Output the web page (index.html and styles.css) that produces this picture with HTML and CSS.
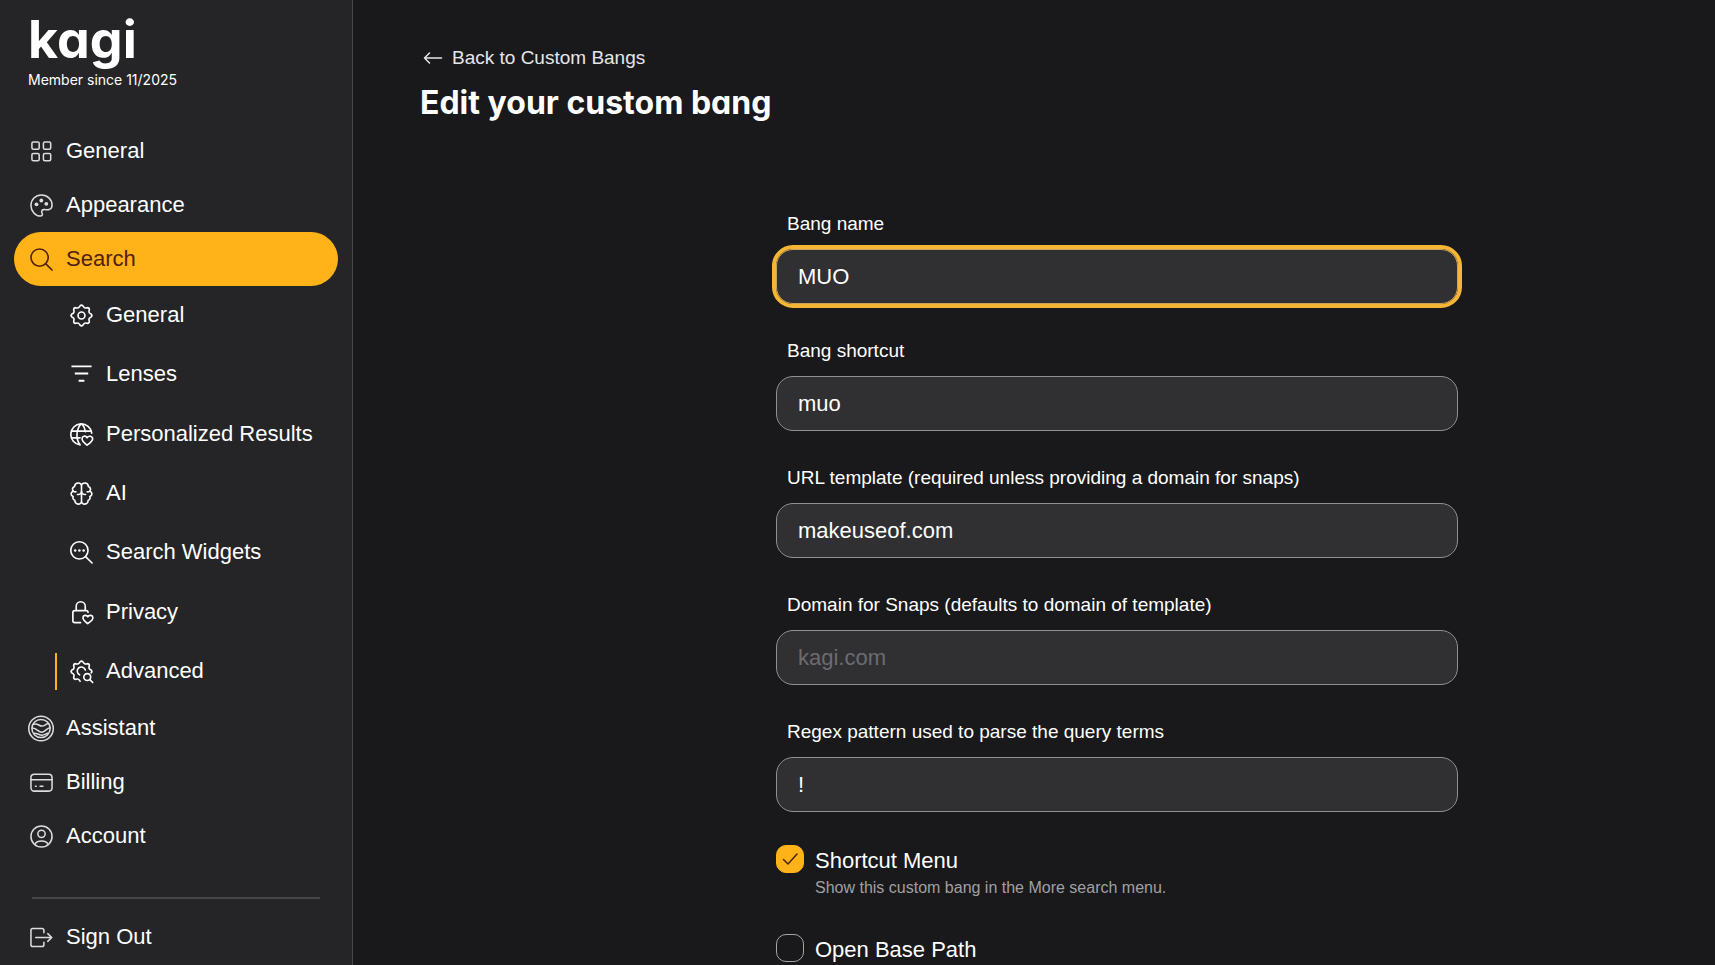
FILE: index.html
```html
<!DOCTYPE html>
<html lang="en">
<head>
<meta charset="utf-8">
<title>Edit your custom bang</title>
<link rel="stylesheet" href="styles.css">
</head>
<body>
<div class="layout">
  <aside class="sidebar">
    <header class="brand">
      <a class="logo" href="#">kagi</a>
      <p class="member">Member since 11/2025</p>
    </header>
    <nav class="nav">
      <a class="item" href="#">
        <svg class="icon dim" viewBox="0 0 24 24"><rect x="2" y="2" width="7.6" height="7.6" rx="1.5"/><rect x="14" y="2" width="7.6" height="7.6" rx="1.5"/><rect x="2" y="14" width="7.6" height="7.6" rx="1.5"/><rect x="14" y="14" width="7.6" height="7.6" rx="1.5"/></svg>
        General</a>
      <a class="item" href="#">
        <svg class="icon dim" viewBox="0 0 24 24"><path d="M12 1C5.600 1 1 6 1 12s4.800 11 9.800 11c2 0 2.600-1.400 1.900-2.700-1-1.800-.6-3.800 1.600-4 2-.2 3.900.4 5.700-.1 2.200-.6 3-2.500 3-4.700C23 5.500 18 1 12 1Z"/><g class="dots"><circle cx="6.800" cy="10.800" r="2"/><circle cx="11.800" cy="6.800" r="2"/><circle cx="17" cy="10.300" r="2"/></g></svg>
        Appearance</a>
      <a class="item active" href="#" aria-current="page">
        <svg class="icon" viewBox="0 0 24 24"><circle cx="10" cy="10" r="9"/><path d="m16.500 16.500 6.500 6.500"/></svg>
        Search</a>
      <div class="subnav">
        <a class="subitem" href="#">
          <svg class="icon" viewBox="0 0 24 24"><path d="M10.500 1.900Q12 .4 13.500 1.900Q14.800 5.200 18.100 3.800Q20.200 3.800 20.200 5.900Q18.800 9.200 22.100 10.500Q23.600 12 22.100 13.500Q18.800 14.800 20.200 18.100Q20.200 20.200 18.100 20.200Q14.800 18.800 13.500 22.100Q12 23.600 10.500 22.100Q9.200 18.800 5.900 20.200Q3.800 20.200 3.800 18.100Q5.200 14.800 1.900 13.500Q.4 12 1.900 10.500Q5.200 9.200 3.800 5.900Q3.800 3.800 5.900 3.800Q9.200 5.200 10.500 1.900Z"/><circle cx="12" cy="12" r="3.600"/></svg>
          General</a>
        <a class="subitem" href="#">
          <svg class="icon bars" viewBox="0 0 24 24"><path d="M1.500 3.500h21M5 11h14M9 18.500h6"/></svg>
          Lenses</a>
        <a class="subitem" href="#">
          <svg class="icon" viewBox="0 0 24 24"><path d="M22.700 10.500A11 11 0 1 0 10.500 22.800M1.500 8.500h20.800M1.500 15.500h9M11.500 1C6 7 6 17 10.500 22.800M12.500 1c2 2.300 3.200 5 3.600 8"/><path d="M17.800 23.200c-2.800-2.200-5.200-3.900-5.200-6.700 0-2.900 3.600-3.800 5.200-1.100 1.600-2.700 5.800-1.700 5.800 1.100 0 2.900-3 4.500-5.800 6.700Z"/></svg>
          Personalized Results</a>
        <a class="subitem" href="#">
          <svg class="icon" viewBox="0 0 24 24"><path d="M12 4c0-4-7-4-7.200.6C2.400 5.500 2 8 3.400 9.600.4 10.500.4 14 3.300 15.200 2.600 17.300 3.500 18.600 5 19c.4 5.400 7 5 7 1ZM12 4c0-4 7-4 7.200.6 2.400.9 2.800 3.400 1.400 5 3 .9 3 4.400.1 5.600.7 2.100-.2 3.400-1.700 3.800-.4 5.400-7 5-7 1"/><path d="M3.400 9.600q1.300 1 2.800.6M20.600 9.600q-1.300 1-2.800.6M7.800 13c2.500.3 4.200-.8 4.200-3 0 2.200 1.700 3.300 4.200 3"/></svg>
          AI</a>
        <a class="subitem" href="#">
          <svg class="icon" viewBox="0 0 24 24"><circle cx="9.800" cy="9.800" r="9"/><path d="m16.300 16.300 6.700 6.700"/><g class="dots"><circle cx="5.400" cy="9.800" r="1.300"/><circle cx="9.800" cy="9.800" r="1.300"/><circle cx="14.200" cy="9.800" r="1.300"/></g></svg>
          Search Widgets</a>
        <a class="subitem" href="#">
          <svg class="icon" viewBox="0 0 24 24"><path d="M11 22.600H5Q3 22.600 3 20.600V12Q3 10 5 10H17Q18.800 10 18.800 12M6.500 10V5.500a4.700 4.700 0 0 1 9.400 0V10"/><path d="M18.500 23.600c-2.600-2-5-3.500-5-6.100 0-2.700 3.500-3.500 5-1.100 1.500-2.400 5.400-1.600 5.400 1.100 0 2.600-2.800 4.100-5.400 6.100Z"/></svg>
          Privacy</a>
        <a class="subitem current" href="#">
          <svg class="icon" viewBox="0 0 24 24"><path d="M22.100 13.500Q23.600 12 22.100 10.500Q18.800 9.200 20.200 5.900Q20.200 3.800 18.100 3.800Q14.800 5.200 13.500 1.900Q12 .4 10.500 1.900Q9.200 5.200 5.900 3.800Q3.800 3.800 3.800 5.900Q5.200 9.200 1.900 10.500Q.4 12 1.900 13.500Q5.200 14.800 3.800 18.100Q3.800 20.200 5.900 20.200Q9.200 18.800 10.500 22.100"/><path d="M10 15.500A4.300 4.300 0 1 1 16 10.500"/><circle cx="18" cy="17.800" r="3.600"/><path d="m20.700 20.500 3 3"/></svg>
          Advanced</a>
      </div>
      <a class="item" href="#">
        <svg class="icon dim" viewBox="0 0 24 24"><circle cx="11.500" cy="12" r="12.800"/><circle cx="11.500" cy="12" r="9.500"/><path d="M3.500 7.500c5-1.500 5.500 2 9 2 3 0 4.200-2.700 7-2.700M2.400 11.500c5 .2 6 4.500 9.800 4.500 3.500 0 5-4.500 8.800-4.700M4.500 17c3.500 0 5 2 8 2 2.500 0 4-1.500 6-2"/></svg>
        Assistant</a>
      <a class="item" href="#">
        <svg class="icon dim" viewBox="0 0 24 24"><rect x="1" y="3.500" width="22" height="17.500" rx="3.500"/><path d="M1 9.200h22M5.700 15.800h.8M10.500 15.800h3"/></svg>
        Billing</a>
      <a class="item" href="#">
        <svg class="icon dim" viewBox="0 0 24 24"><circle cx="12" cy="12" r="11"/><circle cx="12" cy="9.200" r="3.800"/><path d="M5 20.300q1.500-3.600 7-3.600t7 3.600"/></svg>
        Account</a>
      <hr class="divider">
      <a class="item" href="#">
        <svg class="icon dim" viewBox="0 0 24 24"><path d="M14.500 7V4.500Q14.500 2.500 12.500 2.500H3Q1 2.500 1 4.500V19.500Q1 21.500 3 21.500H12.500Q14.500 21.500 14.500 19.500V17M6 12H22.500M18.500 8l4.200 4-4.200 4"/></svg>
        Sign Out</a>
    </nav>
  </aside>
  <main class="main">
    <a class="back" href="#"><svg class="arrow" viewBox="0 0 20 14"><path d="M18.500 7H1.500M6.500 2 1.500 7l5 5"/></svg>Back to Custom Bangs</a>
    <h1 class="title">Edit your custom bang</h1>
    <div class="columns">
      <form class="form">
        <div class="field"><label for="name">Bang name</label><input class="text focused" id="name" type="text" value="MUO"></div>
        <div class="field"><label for="shortcut">Bang shortcut</label><input class="text" id="shortcut" type="text" value="muo"></div>
        <div class="field"><label for="url">URL template (required unless providing a domain for snaps)</label><input class="text" id="url" type="text" value="makeuseof.com"></div>
        <div class="field"><label for="domain">Domain for Snaps (defaults to domain of template)</label><input class="text" id="domain" type="text" placeholder="kagi.com"></div>
        <div class="field"><label for="regex">Regex pattern used to parse the query terms</label><input class="text" id="regex" type="text" value="!"></div>
        <div class="option">
          <span class="check"><input id="menu" type="checkbox" checked aria-describedby="menu-help"><svg class="tick" viewBox="0 0 28 28"><path d="M7.500 14.500 12 19l9-10"/></svg></span>
          <div class="option-text"><label for="menu">Shortcut Menu</label><p class="help" id="menu-help">Show this custom bang in the More search menu.</p></div>
        </div>
        <div class="option">
          <span class="check"><input id="base" type="checkbox"></span>
          <div class="option-text"><label for="base">Open Base Path</label></div>
        </div>
      </form>
    </div>
  </main>
</div>
</body>
</html>
```
FILE: styles.css
```css
* { box-sizing: border-box; }
body {
  margin: 0;
  background: #19191b;
  color: #fff;
  font-family: "Liberation Sans", Arial, sans-serif;
  font-size: 22px;
  line-height: 26px;
}
a { color: inherit; text-decoration: none; }
p, h1 { margin: 0; }
.layout { display: flex; min-height: 100vh; }

.sidebar {
  flex: none;
  width: 353px;
  padding: 0 14px;
  background: #252527;
  border-right: 1px solid #47474a;
}
.brand {
  height: 124px;
  padding: 10px 0 0 14px;
  font-family: Inter, sans-serif;
  font-feature-settings: "cv11";
}
.logo { display: block; font-size: 52px; line-height: 60px; font-weight: 700; }
.member { font-size: 14px; line-height: 20px; font-weight: 400; }

.item, .subitem { display: flex; align-items: center; gap: 13px; }
.item { height: 54px; padding-left: 16px; border-radius: 27px; }
.active { background: #ffb319; color: #4f210f; }
.subnav {
  display: grid;
  grid-template-rows: repeat(7, 1fr);
  height: 416px;
  margin-top: -1px;
  padding-left: 36px;
}
.subitem { position: relative; padding-left: 20px; }
.current::before {
  content: "";
  position: absolute;
  left: 5px;
  top: 11px;
  bottom: 11px;
  width: 2px;
  background: #ffb319;
}
.icon {
  flex: none;
  width: 23px;
  height: 23px;
  margin-top: 1px;
  overflow: visible;
  fill: none;
  stroke: currentColor;
  stroke-width: 1.7;
  stroke-linecap: round;
  stroke-linejoin: round;
}
.dim { color: #dcdcde; stroke-width: 1.6; }
.bars { stroke-width: 2; stroke-linecap: butt; }
.dots { fill: currentColor; stroke: none; }
.divider {
  height: 2px;
  margin: 34px 18px 11px;
  border: 0;
  background: #464648;
}

.main { flex: 1; min-width: 0; padding: 45px 0 0 67px; }
.back {
  display: inline-flex;
  align-items: center;
  gap: 9px;
  padding-left: 3px;
  color: #e6e6e8;
  font-size: 19px;
}
.arrow {
  width: 20px;
  height: 14px;
  fill: none;
  stroke: currentColor;
  stroke-width: 1.5;
  stroke-linecap: round;
  stroke-linejoin: round;
}
.title {
  margin-top: 12px;
  font-family: Inter, sans-serif;
  font-feature-settings: "cv11";
  font-size: 32px;
  line-height: 40px;
  font-weight: 700;
}
.columns { display: grid; grid-template-columns: 356fr 682fr 257fr; margin-top: 88px; }
.form { grid-column: 2; }
.field { display: grid; gap: 12px; margin-bottom: 34px; }
.field label { padding-left: 11px; font-size: 19px; }
.text {
  width: 100%;
  height: 55px;
  padding: 0 21px;
  border: 1px solid #909094;
  border-radius: 17px;
  background: #303033;
  color: #fff;
  font: inherit;
}
.text::placeholder { color: #6c6c6f; opacity: 1; }
.text.focused { outline: 4px solid #f5b535; outline-offset: 0; border-color: #c9a35c; }

.option { display: flex; gap: 11px; min-height: 56px; margin-bottom: 31px; }
.option:nth-last-child(2) { margin-top: -1px; }
.option:last-child { min-height: 0; margin-bottom: 0; }
.check { display: grid; flex: none; width: 28px; height: 28px; }
.check > * { grid-area: 1 / 1; margin: 0; width: 28px; height: 28px; }
.check input { appearance: none; border: 1px solid #a5a5a8; border-radius: 10px; }
.check input:checked { border-color: #ffb319; background: #ffb319; }
.tick {
  pointer-events: none;
  fill: none;
  stroke: #4f210f;
  stroke-width: 1.5;
  stroke-linecap: round;
  stroke-linejoin: round;
}
.option-text label { display: block; padding-top: 3px; line-height: 25px; }
.help { color: #a0a0a3; font-size: 16px; line-height: 30px; }
```
